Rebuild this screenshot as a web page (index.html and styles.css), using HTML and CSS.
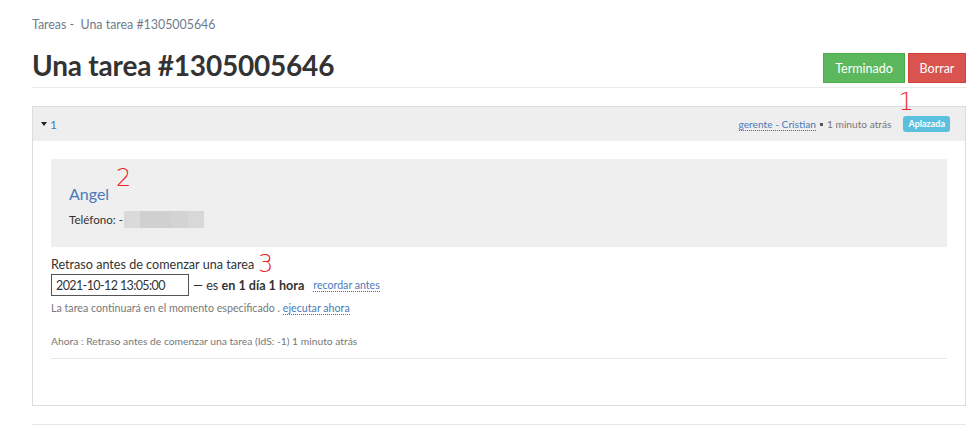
FILE: index.html
```html
<!DOCTYPE html>
<html lang="es">
<head>
<meta charset="utf-8">
<link rel="stylesheet" href="styles.css">
</head>
<body>
<div class="page">
  <div class="crumbs"><a class="crumb">Tareas</a> -&nbsp; <a class="crumb">Una tarea #1305005646</a></div>
  <div class="head">
    <h1>Una tarea #1305005646</h1>
    <div class="actions">
      <button class="btn btn-ok">Terminado</button>
      <button class="btn btn-del">Borrar</button>
    </div>
  </div>
  <div class="panel">
    <div class="panel-head">
      <div class="toggle"><span class="caret"></span><span class="num">1</span></div>
      <div class="meta">
        <a class="dotted">gerente - Cristian</a> <span class="dot"></span> 1 minuto atrás
        <span class="badge">Aplazada<span class="mark mark1">1</span></span>
      </div>
    </div>
    <div class="panel-body">
      <div class="contact">
        <div class="name">Angel<span class="mark mark2">2</span></div>
        <div class="phone">Teléfono: -<span class="blur"><i></i><i></i><i></i><i></i></span></div>
      </div>
      <div class="label">Retraso antes de comenzar una tarea<span class="mark mark3">3</span></div>
      <div class="row">
        <input class="date" type="text" value="2021-10-12 13:05:00">
        <span class="es">— es <b>en 1 día 1 hora</b></span>
        <a class="dotted small">recordar antes</a>
      </div>
      <div class="hint">La tarea continuará en el momento especificado . <a class="dotted">ejecutar ahora</a></div>
      <div class="log">Ahora : Retraso antes de comenzar una tarea (IdS: -1) 1 minuto atrás</div>
      <div class="sep"></div>
    </div>
  </div>
  <div class="bottom-rule"></div>
</div>
</body>
</html>
```
FILE: styles.css
```css
* { box-sizing: border-box; }
html, body { margin: 0; padding: 0; background: #fff; }
body {
  font-family: Lato, "Liberation Sans", sans-serif;
  color: #333;
  font-size: 13px;
}
.page {
  width: 976px;
  padding: 0 10px 0 32px;
}
.crumbs {
  padding-top: 16px;
  height: 40px;
  color: #6f7c8e;
  font-size: 12.4px;
  line-height: 18px;
}
.crumb { color: #6f7c8e; }
.head {
  display: flex;
  justify-content: space-between;
  align-items: flex-start;
  border-bottom: 1px solid #eaeaea;
  padding-bottom: 3px;
  height: 48px;
}
h1 {
  margin: 0;
  font-size: 28px;
  line-height: 34px;
  font-weight: 700;
  color: #333;
  padding-top: 8px;
  letter-spacing: -0.2px;
}
.actions { display: flex; gap: 3px; padding-top: 13px; }
.btn {
  font-family: inherit;
  font-size: 12.5px;
  color: #fff;
  height: 30px;
  padding: 0 8px;
  border-radius: 0;
  cursor: pointer;
}
.btn-ok { background: #5cb85c; border: 1px solid #4cae4c; width: 82px; }
.btn-del { background: #d9534f; border: 1px solid #d43f3a; width: 58px; }

.panel {
  margin-top: 18px;
  border: 1px solid #dcdcdc;
  height: 300px;
}
.panel-head {
  background: #eeeeee;
  height: 34px;
  display: flex;
  justify-content: space-between;
  align-items: center;
  padding: 0 15px 0 8px;
}
.toggle { display: flex; align-items: center; gap: 3px; color: #4a7ab8; font-size: 12px; }
.caret {
  width: 0; height: 0;
  border-left: 3.5px solid transparent;
  border-right: 3.5px solid transparent;
  border-top: 4px solid #222;
}
.meta { font-size: 10.2px; color: #777; display: flex; align-items: center; gap: 3px; }
.dotted {
  color: #4a7ab8;
  border-bottom: 1px dotted #2a6fc0;
  text-decoration: none;
}
.dot { display: inline-block; width: 3px; height: 3px; background: #555; margin: 0 1px; }
.badge {
  position: relative;
  margin-left: 9px;
  background: #5bc0de;
  color: #fff;
  font-weight: 700;
  font-size: 9px;
  padding: 2px 5px 3px;
  border-radius: 3px;
  line-height: 11px;
}
.mark {
  position: absolute;
  color: #e8262a;
  font-family: "DejaVu Sans", sans-serif;
  font-weight: 300;
  font-size: 24px;
  line-height: 1;
}
.mark1 { left: -5px; top: -26px; }
.panel-body { padding: 18px 18px 0 18px; }
.contact {
  background: #efefef;
  height: 88px;
  padding: 25px 18px 0 18px;
}
.name {
  position: relative;
  display: inline-block;
  color: #4a7ab8;
  font-size: 16px;
  line-height: 20px;
}
.mark2 { left: 47px; top: -18px; }
.phone {
  margin-top: 6px;
  font-size: 11.6px;
  display: flex;
  align-items: center;
  height: 18px;
}
.blur { display: inline-flex; height: 17px; margin-left: 1px; }
.blur i { display: block; height: 17px; background: #d4d4d4; }
.blur i:nth-child(1) { width: 16px; background: #dadada; }
.blur i:nth-child(2) { width: 31px; background: #d0d0d0; }
.blur i:nth-child(3) { width: 17px; background: #d3d3d3; }
.blur i:nth-child(4) { width: 16px; background: #d8d8d8; }
.label {
  position: relative;
  display: inline-block;
  margin-top: 10px;
  font-size: 12.6px;
  line-height: 16px;
}
.mark3 { right: -19px; top: -5px; }
.row { display: flex; align-items: center; margin-top: 1px; }
.date {
  width: 138px;
  height: 22px;
  border: 1px solid #555;
  font-family: inherit;
  font-size: 12.5px;
  letter-spacing: -0.6px;
  padding: 0 4px;
  color: #333;
}
.es { margin-left: 4px; font-size: 12.6px; color: #333; }
.es b { font-weight: 700; }
.small { margin-left: 9px; font-size: 10.6px; }
.hint { margin-top: 4px; font-size: 10.7px; color: #777; line-height: 16px; }
.log { margin-top: 17px; font-size: 10.3px; color: #777; line-height: 16px; }
.sep { margin-top: 9px; border-top: 1px solid #e8e8e8; }
.bottom-rule { margin-top: 18px; border-top: 1px solid #e6e6e6; }
```
